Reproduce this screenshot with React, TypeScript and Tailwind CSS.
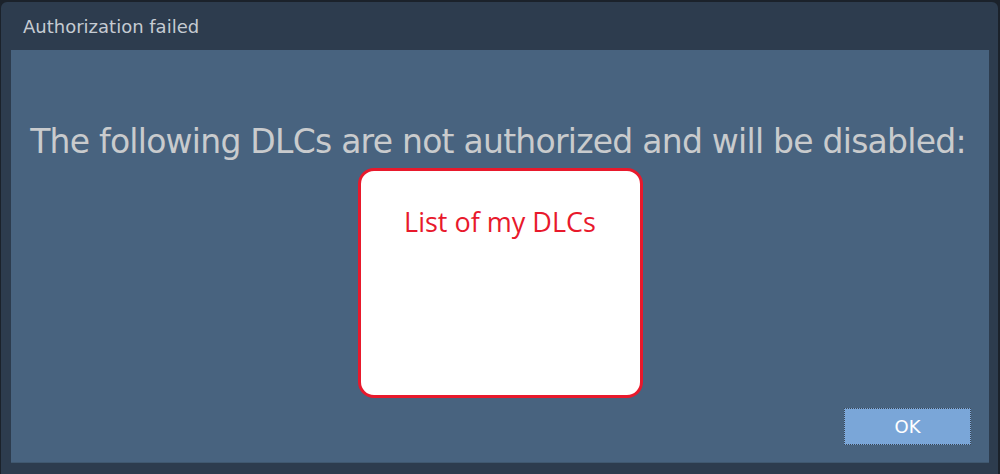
const App = () => {
  return (
    <div className="w-[1000px] h-[474px] bg-[#1b222b] pt-[2px] overflow-hidden">
      <div
        className="ml-[1px] w-[997px] h-[472px] bg-[#2d3c4e] rounded-t-[6px] flex flex-col"
        style={{ fontFamily: "Tahoma, 'DejaVu Sans', sans-serif" }}
      >
        <div className="h-[48px] pl-[22px] flex items-center text-[18px] text-[#c5cbd2]">
          Authorization failed
        </div>
        <div className="ml-[10px] mr-[9px] h-[413px] bg-[#48637f] border-b border-[#40586f] flex flex-col items-center relative">
          <div className="mt-[70px] -ml-[4px] text-[33px] leading-[44px] text-[#c9cbcd] tracking-[-0.75px] whitespace-nowrap">
            The following DLCs are not authorized and will be disabled:
          </div>
          <div className="mt-[4px] w-[285px] h-[230px] bg-white border-[3px] border-[#e8192c] rounded-[16px] flex justify-center">
            <span
              className="mt-[31px] text-[27px] text-[#e8192c]"
              style={{ fontFamily: "'Open Sans', sans-serif" }}
            >
              List of my DLCs
            </span>
          </div>
          <button className="absolute right-[18px] bottom-[17px] w-[127px] h-[37px] bg-[#7aa6d8] border border-dotted border-[#3b4552] text-white text-[18px]">
            OK
          </button>
        </div>
      </div>
    </div>
  );
};

export default App;
